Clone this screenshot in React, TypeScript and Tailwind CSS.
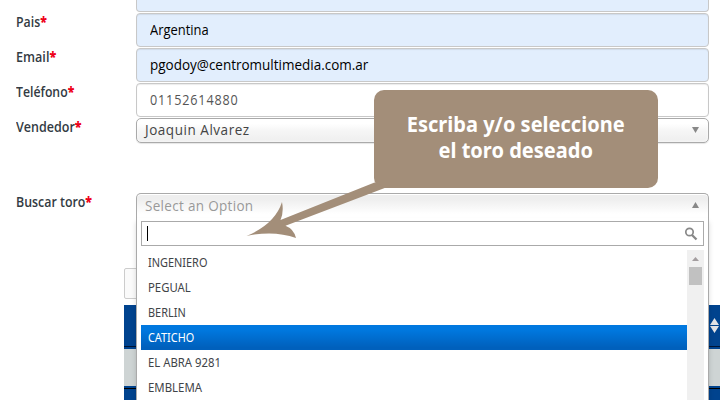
import React from "react";

const bulls = [
  { name: "INGENIERO", fit: "scale-x-[0.91]" },
  { name: "PEGUAL", fit: "scale-x-[0.945]" },
  { name: "BERLIN", fit: "scale-x-[0.91]" },
  { name: "CATICHO", fit: "scale-x-[0.905]" },
  { name: "EL ABRA 9281", fit: "scale-x-[0.945]" },
  { name: "EMBLEMA", fit: "scale-x-[0.95]" },
];

function Row({ label, labelClass, children }: { label: string; labelClass: string; children: React.ReactNode }) {
  return (
    <div className="flex items-start">
      <div className="w-[136px] shrink-0 whitespace-nowrap pl-4 text-[14px] font-semibold leading-[18px] text-[#333b43]">
        <span className={`inline-block origin-left ${labelClass}`}>
          {label}
          <span className="font-extrabold text-[#ee0018]">*</span>
        </span>
      </div>
      {children}
    </div>
  );
}

function Field({ value, className, textClass }: { value: string; className: string; textClass: string }) {
  return (
    <div
      className={`flex h-[34px] w-[573px] items-center rounded-[4px] border border-[#c8c8c8] pb-[2px] pl-[13px] text-[14px] shadow-[inset_0_1px_1px_rgba(0,0,0,0.08)] ${className}`}
    >
      <span className={`inline-block origin-left ${textClass}`}>{value}</span>
    </div>
  );
}

function Dropdown() {
  return (
    <div className="absolute left-0 top-[25px] h-[190px] w-[573px] border-x border-[#aaa] bg-white px-1 pt-[3px] shadow-[0_4px_5px_rgba(0,0,0,0.15)]">
      <div className="flex h-[25px] w-[563px] items-center justify-between border border-[#aaa] bg-white pl-[5px] pr-[5px]">
        <div className="h-[15px] w-px bg-black" />
        <svg width="14" height="14" viewBox="0 0 14 14" fill="none" stroke="#888">
          <circle cx="5.5" cy="5" r="3.7" strokeWidth="1.7" />
          <path d="M8 8l4.5 4.5" strokeWidth="2.3" />
        </svg>
      </div>
      <div className="mt-1 flex h-[160px] w-[563px]">
        <ul className="w-[546px] text-[#3f4448]">
          {bulls.map(({ name, fit }) => (
            <li
              key={name}
              className={`flex h-[25px] items-center pl-[7px] pt-px font-['Noto_Sans',sans-serif] text-[12px] ${
                name === "CATICHO" ? "bg-linear-to-b from-[#0078df] from-20% to-[#0060bc] to-90% text-white" : ""
              }`}
            >
              <span className={`inline-block origin-left ${fit}`}>{name}</span>
            </li>
          ))}
        </ul>
        <div className="flex w-[17px] flex-col items-center bg-[#f0f0f0] pt-[7px]">
          <svg width="7" height="4" viewBox="0 0 7 4">
            <path d="M3.5 0L7 4H0z" fill="#a39d9f" />
          </svg>
          <div className="mt-[6px] h-[18px] w-[13px] bg-[#c1c1c1]" />
        </div>
      </div>
    </div>
  );
}

export default function App() {
  return (
    <div className="relative h-[400px] w-[720px] overflow-hidden bg-white font-['Open_Sans',sans-serif]">
      <div className="flex flex-col gap-px">
        <div className="ml-[136px] h-3 w-[573px] rounded-b-[4px] border border-t-0 border-[#c8c8c8] bg-[#e2eefd]" />
        <Row label="Pais" labelClass="scale-x-[0.88]">
          <Field value="Argentina" className="bg-[#e2eefd]" textClass="scale-x-[0.925] text-black" />
        </Row>
        <Row label="Email" labelClass="scale-x-[0.9]">
          <Field
            value="pgodoy@centromultimedia.com.ar"
            className="bg-[#e2eefd]"
            textClass="scale-x-[0.963] text-black"
          />
        </Row>
        <Row label="Teléfono" labelClass="scale-x-[0.875]">
          <Field value="01152614880" className="bg-white" textClass="scale-x-[0.9] tracking-[0.95px] text-[#555]" />
        </Row>
        <Row label="Vendedor" labelClass="scale-x-[0.895]">
          <div className="flex h-[25px] w-[573px] items-center justify-between rounded-[5px] border border-[#aaa] bg-linear-to-b from-white from-20% via-[#f6f6f6] via-50% to-[#eee] pb-[2px] pl-2 pr-[9px] text-[15px] text-[#444] shadow-[inset_0_0_3px_white,0_1px_1px_rgba(0,0,0,0.1)]">
            <span className="inline-block origin-left scale-x-[0.9] tracking-[0.6px]">Joaquin Alvarez</span>
            <svg width="7" height="6" viewBox="0 0 7 6">
              <path d="M0 0h7L3.5 6z" fill="#888" />
            </svg>
          </div>
        </Row>
      </div>

      <div className="mt-[50px]">
        <Row label="Buscar toro" labelClass="scale-x-[0.885]">
          <div className="relative z-10">
            <div className="flex h-[26px] w-[573px] items-center justify-between rounded-t-[5px] border border-b-0 border-[#aaa] bg-linear-to-b from-[#eee] from-20% to-white to-80% pb-[3px] pl-2 pr-[9px] text-[15px] text-[#999] shadow-[inset_0_1px_0_white]">
              <span className="inline-block origin-left scale-x-[0.9] tracking-[0.35px]">Select an Option</span>
              <svg width="7" height="6" viewBox="0 0 7 6">
                <path d="M3.5 0L7 6H0z" fill="#888" />
              </svg>
            </div>
            <Dropdown />
          </div>
        </Row>
      </div>

      <div className="ml-[124px] mt-[49px]">
        <div className="h-[31px] w-[100px] rounded-[2px] border border-[#ccc] bg-[#fafafa]" />
        <div className="mt-[6px] flex h-[44px] items-start justify-end bg-linear-to-b from-[#00438e] from-[41px] via-black via-[41px] to-[#00438e] to-[42px] pr-px pt-[13px]">
          <svg width="9" height="15" viewBox="0 0 9 15" fill="#e1e2e5">
            <path d="M4.5 0L9 7H0zM0 8h9l-4.5 7z" />
          </svg>
        </div>
        <div className="h-[37px] bg-[#ced4d4]" />
        <div className="h-[2px] bg-[#00438e]" />
        <div className="h-px bg-black" />
        <div className="h-[14px] bg-[#00438e]" />
      </div>

      <div className="absolute left-[374px] top-[90px] z-20 flex h-[98px] w-[284px] items-center justify-center rounded-[10px] bg-[#a38e79] pb-[6px] font-['Noto_Sans',sans-serif] text-white">
        <p className="scale-x-[0.91] whitespace-pre text-center text-[22px] font-bold leading-[26px]">
          {"Escriba y/o seleccione\nel toro deseado"}
        </p>
      </div>
      <svg className="absolute left-[246px] top-[178px] z-20" width="144" height="62" viewBox="0 0 144 62">
        <path d="M0.5 58Q29 46 36 24Q38 34 34.5 42L128.5 4.5L140 9.5L39.5 47.7Q48 51 50 60Q28 52 0.5 58z" fill="#a38e79" />
      </svg>
    </div>
  );
}
